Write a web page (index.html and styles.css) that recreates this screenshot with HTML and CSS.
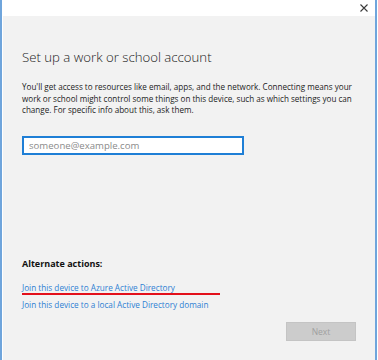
FILE: index.html
```html
<!DOCTYPE html>
<html lang="en">
<head>
    <meta charset="UTF-8">
    <meta name="viewport" content="width=device-width, initial-scale=1.0">
    <title>Set up a work or school account</title>
    <link rel="stylesheet" href="styles.css">
</head>
<body>
    <div class="window">
        <div class="titlebar">
            <span class="close">
                <svg width="8" height="8" viewBox="0 0 8 8">
                    <path d="M0.5 0.5 L7.5 7.5 M7.5 0.5 L0.5 7.5" stroke="#3a3a3a" stroke-width="1.1" fill="none"/>
                </svg>
            </span>
        </div>
        <div class="content">
            <h1>Set up a work or school account</h1>
            <p class="intro">You'll get access to resources like email, apps, and the network. Connecting means your work or school might control some things on this device, such as which settings you can change. For specific info about this, ask them.</p>
            <input class="email" type="text" placeholder="someone@example.com">

            <div class="alternate">
                <h3>Alternate actions:</h3>
                <a href="#" class="action marked">Join this device to Azure Active Directory</a>
                <a href="#" class="action">Join this device to a local Active Directory domain</a>
            </div>

            <div class="footer">
                <button disabled>Next</button>
            </div>
        </div>
    </div>
</body>
</html>
```

FILE: styles.css
```css
body {
    margin: 0;
    padding: 0;
    background-color: #fff;
    font-family: "Open Sans", "Noto Sans", sans-serif;
}

.window {
    width: 373px;
    height: 360px;
    border-left: 2px solid #6fa5dc;
    border-right: 2px solid #6fa5dc;
    display: flex;
    flex-direction: column;
}

.titlebar {
    height: 16px;
    background-color: #fff;
    display: flex;
    justify-content: flex-end;
    align-items: center;
    padding-right: 7px;
}

.close {
    display: flex;
}

.content {
    flex: 1;
    background-color: #f2f2f2;
    margin-left: 1px;
    padding: 0 19px 0 19px;
    display: flex;
    flex-direction: column;
}

h1 {
    margin: 32px 0 0 0;
    font-size: 13.2px;
    font-weight: 300;
    line-height: 18px;
    color: #1a1a1a;
}

.intro {
    margin: 15px 0 0 0;
    font-size: 8.1px;
    line-height: 11.5px;
    color: #222;
    width: 338px;
}

.email {
    margin-top: 20px;
    width: 222px;
    height: 19px;
    box-sizing: border-box;
    border: 2px solid #1f7fd6;
    padding: 0 5px;
    font-family: inherit;
    font-size: 9.6px;
    background-color: #fff;
    outline: none;
}

.email::placeholder {
    color: #8a8a8a;
}

.alternate {
    margin-top: 103px;
    display: flex;
    flex-direction: column;
}

.alternate h3 {
    margin: 0 0 12px 0;
    font-size: 9px;
    font-weight: 700;
    line-height: 12px;
    color: #111;
}

.action {
    font-size: 8.2px;
    line-height: 11px;
    color: #2e7fd2;
    text-decoration: none;
    align-self: flex-start;
}

.marked {
    width: 198px;
    border-bottom: 2px solid #e3101b;
    margin-bottom: 4px;
}

.footer {
    display: flex;
    justify-content: flex-end;
    margin-top: 12px;
}

button {
    width: 70px;
    height: 19px;
    background-color: #cccccc;
    border: 1px solid #c4c4c4;
    color: #a0a0a0;
    font-family: inherit;
    font-size: 8.5px;
}
```
